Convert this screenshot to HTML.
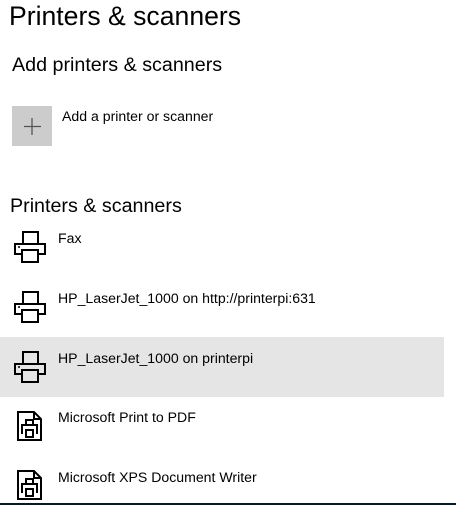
<!DOCTYPE html>
<html><head><style>
body{margin:0;width:456px;height:505px;background:#fff;font-family:"Liberation Sans",sans-serif;color:#000;position:relative;overflow:hidden}
.t{position:absolute;white-space:nowrap}
svg{position:absolute}
</style></head><body>
<div class="t" style="left:9px;top:1px;font-size:26.6px">Printers &amp; scanners</div>
<div class="t" style="left:12px;top:54px;font-size:19.7px">Add printers &amp; scanners</div>
<div style="position:absolute;left:12px;top:106px;width:40px;height:40px;background:#cccccc"></div>
<svg style="left:12px;top:106px" width="40" height="40"><path d="M20 12V29M12 20.5H29" stroke="#555" stroke-width="1.3" fill="none"/></svg>
<div class="t" style="left:62px;top:108px;font-size:14.1px">Add a printer or scanner</div>
<div class="t" style="left:10px;top:195px;font-size:19.7px">Printers &amp; scanners</div>
<div style="position:absolute;left:0;top:337px;width:444px;height:60px;background:#e5e5e5"></div>
<svg style="left:0;top:0" width="456" height="505" fill="none" stroke="#000" stroke-width="2">
<g id="p"><path d="M23 243V232H38V243M22 254H15V244H45V254H38M22 250H38V262H22Z"/><path d="M18 247h2" stroke-width="1.5"/></g>
<use href="#p" y="60"/><use href="#p" y="120"/>
<g id="d"><path d="M18 412H34L41 419V440H18Z M34 412V419H41"/><path d="M26 424V420H33V424M22 434V425H37V434M26 430H33V437H26Z" stroke-width="2"/></g>
<use href="#d" y="59"/>
</svg>
<div class="t" style="left:58px;top:230px;font-size:14.1px">Fax</div>
<div class="t" style="left:58px;top:290px;font-size:14.1px">HP_LaserJet_1000 on http://printerpi:631</div>
<div class="t" style="left:58px;top:350px;font-size:14.1px">HP_LaserJet_1000 on printerpi</div>
<div class="t" style="left:58px;top:409px;font-size:14.1px">Microsoft Print to PDF</div>
<div class="t" style="left:58px;top:469px;font-size:14.1px">Microsoft XPS Document Writer</div>
<div style="position:absolute;left:0;top:503px;width:456px;height:2px;background:#0a1a24"></div>
</body></html>
